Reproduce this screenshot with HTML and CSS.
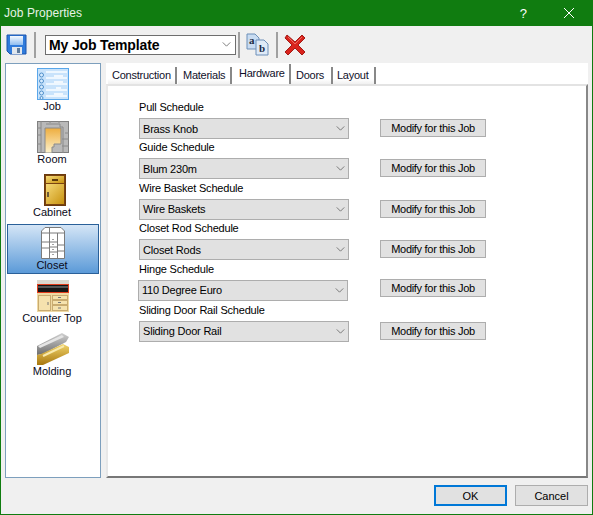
FILE: index.html
```html
<!DOCTYPE html>
<html lang="en">
<head>
	<meta charset="UTF-8">
	<title>Job Properties</title>
	<link rel="stylesheet" href="styles.css">
</head>
<body>
<div class="window">
	<div class="titlebar">
		<span class="title">Job Properties</span>
		<span class="help">?</span>
		<svg class="close" width="12" height="12" viewBox="0 0 12 12"><path d="M1 1L11 11M11 1L1 11" stroke="#fff" stroke-width="1" fill="none"/></svg>
	</div>

	<div class="toolbar">
		<svg class="tool-save" width="21" height="21" viewBox="0 0 21 21">
			<defs>
				<linearGradient id="diskFace" x1="0" y1="0" x2="0" y2="1"><stop offset="0" stop-color="#f4f9ff"/><stop offset="1" stop-color="#8fbdf0"/></linearGradient>
			</defs>
			<path d="M1 1H20V20H4L1 17Z" fill="#2f7bdc" stroke="#1c55ab"/>
			<rect x="4" y="2" width="13" height="9" fill="url(#diskFace)"/>
			<rect x="6" y="13" width="10" height="7" fill="#dfe6ee"/>
			<rect x="11" y="14" width="3" height="5" fill="#5d7a9c"/>
		</svg>
		<span class="sep sep-save"></span>
		<div class="template-box">
			<span>My Job Template</span>
			<svg class="chevron" viewBox="0 0 10 6"><path d="M0.5 0.5L5 5L9.5 0.5" fill="none"/></svg>
		</div>
		<span class="sep sep-combo"></span>
		<svg class="tool-rename" width="23" height="23" viewBox="0 0 23 23">
			<path d="M1 1H9L13 5V16H1Z" fill="#c9dcf2" stroke="#6d8fb8"/>
			<path d="M10 7H18L22 11V22H10Z" fill="#dfeaf7" stroke="#6d8fb8"/>
			<text x="3" y="11" class="ab">a</text>
			<text x="13" y="19" class="ab">b</text>
		</svg>
		<span class="sep sep-rename"></span>
		<svg class="tool-delete" width="22" height="22" viewBox="0 0 22 22">
			<path d="M3 1L11 8L18 1L21 4L14 11L21 18L18 21L11 14L4 21L1 18L8 11L1 4Z" fill="#d9231c" stroke="#a31a15" stroke-linejoin="round"/>
			<path d="M4 3L11 10L18 3" stroke="#ee6a60" fill="none"/>
		</svg>
	</div>

	<div class="main">
		<div class="sidebar">
			<div class="side-item">
				<svg width="32" height="32" viewBox="0 0 32 32">
					<rect x="0.5" y="0.5" width="31" height="31" fill="#c9e3fb" stroke="#5aa7ea"/>
					<path d="M9 4H30M9 10H30M9 16H30M9 22H30M9 28H30" stroke="#eef7ff" stroke-width="2"/>
					<path d="M17 8H26M17 14H26M19 20H24M17 26H26" stroke="#fff" stroke-width="1.5"/>
					<g fill="#d6ecff" stroke="#4f8fca">
						<circle cx="4.5" cy="7" r="2"/><circle cx="4.5" cy="13" r="2"/><circle cx="4.5" cy="19" r="2"/><circle cx="4.5" cy="25" r="2"/><circle cx="4.5" cy="30" r="1.5"/>
					</g>
				</svg>
				<span>Job</span>
			</div>
			<div class="side-item">
				<svg width="32" height="32" viewBox="0 0 32 32">
					<defs>
						<linearGradient id="roomFloor" x1="0" y1="0" x2="0" y2="1"><stop offset="0" stop-color="#eead3e"/><stop offset="1" stop-color="#fdf3cf"/></linearGradient>
					</defs>
					<rect x="0.5" y="0.5" width="31" height="31" fill="#b9b9b9" stroke="#808080"/>
					<path d="M0 7H4M0 14H4M0 23H4M4 0V32M28 12H32M25 18H32M25 25H32M13 0V2M22 0V2M9 3H23V6H26V32" stroke="#8a8a8a" fill="none"/>
					<path d="M8 7H24V23H17V26H15V32H8Z" fill="url(#roomFloor)" stroke="#8a8a8a"/>
				</svg>
				<span>Room</span>
			</div>
			<div class="side-item">
				<svg class="icon-cabinet" width="22" height="32" viewBox="0 0 22 32">
					<defs>
						<linearGradient id="cabGold" x1="0" y1="0" x2="1" y2="1"><stop offset="0" stop-color="#f6da78"/><stop offset="1" stop-color="#c8920f"/></linearGradient>
					</defs>
					<rect x="0.5" y="0.5" width="21" height="31" fill="#7a4310" stroke="#6a3a0d"/>
					<rect x="2" y="2" width="18" height="7" fill="url(#cabGold)"/>
					<rect x="2" y="10" width="18" height="20" fill="url(#cabGold)"/>
					<rect x="8" y="5" width="6" height="2" fill="#5e3b0c"/>
					<rect x="3" y="18" width="2" height="5" fill="#6d5a3a"/>
				</svg>
				<span>Cabinet</span>
			</div>
			<div class="side-item selected">
				<svg width="24" height="32" viewBox="0 0 24 32">
					<path d="M0.5 31.5V4L4 0.5H20L23.5 4V31.5Z" fill="#fff" stroke="#7b7b7b"/>
					<path d="M0.5 6H23.5M8.5 1V31.5M16.5 6V31.5M0.5 15H8.5M0.5 21H8.5M8.5 15H16.5M8.5 20H16.5M8.5 25H16.5M16.5 18H23.5M16.5 24H23.5" stroke="#7b7b7b" fill="none"/>
					<path d="M12 12V13M12 17V18M12 22V23M12 27V28" stroke="#444"/>
				</svg>
				<span>Closet</span>
			</div>
			<div class="side-item">
				<svg width="32" height="32" viewBox="0 0 32 32">
					<rect x="0" y="0" width="32" height="4" fill="#dcd8cf"/>
					<rect x="0.5" y="4.5" width="31" height="8" fill="#161616" stroke="#e23d1c"/>
					<rect x="1" y="6" width="30" height="2" fill="#555"/>
					<rect x="0" y="13" width="32" height="19" fill="#efd9a3"/>
					<rect x="1.5" y="15.5" width="12" height="15" fill="#f5e2ae" stroke="#c9ab70"/>
					<g fill="#f5e2ae" stroke="#c9ab70">
						<rect x="15.5" y="15.5" width="15" height="4"/><rect x="15.5" y="20.5" width="15" height="4"/><rect x="15.5" y="25.5" width="15" height="5"/>
					</g>
					<path d="M21 17.500H24M21 22.500H24M21 28H24M11 22V25" stroke="#777"/>
				</svg>
				<span>Counter Top</span>
			</div>
			<div class="side-item">
				<svg width="32" height="32" viewBox="0 0 32 32">
					<defs>
						<linearGradient id="moldGray" x1="0" y1="0" x2="0" y2="1"><stop offset="0" stop-color="#d0d0d0"/><stop offset="1" stop-color="#6e6e6e"/></linearGradient>
						<linearGradient id="moldGold" x1="0" y1="0" x2="0" y2="1"><stop offset="0" stop-color="#f0d36a"/><stop offset="1" stop-color="#a9780f"/></linearGradient>
					</defs>
					<path d="M0 13L25 0L32 4L29 9L6 21L0 22Z" fill="url(#moldGray)"/>
					<path d="M1 13L25 2L27 4L3 15Z" fill="#e4e4e4"/>
					<path d="M0 22V32H6L32 20V14L26 11L4 21Z" fill="url(#moldGold)"/>
					<path d="M6 23L27 13" stroke="#f8e9ac" stroke-width="2"/>
				</svg>
				<span>Molding</span>
			</div>
		</div>

		<div class="tabs">
			<div class="tab-strip">
				<span class="tab tab-construction">Construction</span>
				<span class="tab tab-materials">Materials</span>
				<span class="tab tab-hardware active">Hardware</span>
				<span class="tab tab-doors">Doors</span>
				<span class="tab tab-layout">Layout</span>
			</div>
			<div class="tab-panel">
				<div class="field">
					<label>Pull Schedule</label>
					<div class="field-row">
						<div class="picker">Brass Knob<svg class="chevron" viewBox="0 0 10 6"><path d="M0.5 0.5L5 5L9.5 0.5" fill="none"/></svg></div>
						<button class="modify">Modify for this Job</button>
					</div>
				</div>
				<div class="field">
					<label>Guide Schedule</label>
					<div class="field-row">
						<div class="picker">Blum 230m<svg class="chevron" viewBox="0 0 10 6"><path d="M0.5 0.5L5 5L9.5 0.5" fill="none"/></svg></div>
						<button class="modify">Modify for this Job</button>
					</div>
				</div>
				<div class="field">
					<label>Wire Basket Schedule</label>
					<div class="field-row">
						<div class="picker">Wire Baskets<svg class="chevron" viewBox="0 0 10 6"><path d="M0.5 0.5L5 5L9.5 0.5" fill="none"/></svg></div>
						<button class="modify">Modify for this Job</button>
					</div>
				</div>
				<div class="field">
					<label>Closet Rod Schedule</label>
					<div class="field-row">
						<div class="picker">Closet Rods<svg class="chevron" viewBox="0 0 10 6"><path d="M0.5 0.5L5 5L9.5 0.5" fill="none"/></svg></div>
						<button class="modify">Modify for this Job</button>
					</div>
				</div>
				<div class="field">
					<label>Hinge Schedule</label>
					<div class="field-row">
						<div class="picker picker-left">110 Degree Euro<svg class="chevron" viewBox="0 0 10 6"><path d="M0.5 0.5L5 5L9.5 0.5" fill="none"/></svg></div>
						<button class="modify modify-up">Modify for this Job</button>
					</div>
				</div>
				<div class="field field-last">
					<label>Sliding Door Rail Schedule</label>
					<div class="field-row">
						<div class="picker">Sliding Door Rail<svg class="chevron" viewBox="0 0 10 6"><path d="M0.5 0.5L5 5L9.5 0.5" fill="none"/></svg></div>
						<button class="modify">Modify for this Job</button>
					</div>
				</div>
			</div>
		</div>
	</div>

	<div class="footer">
		<button class="dlg-btn default">OK</button>
		<button class="dlg-btn">Cancel</button>
	</div>
</div>
</body>
</html>
```

FILE: styles.css
```css
*{padding: 0; margin: 0; box-sizing: border-box;}
html, body{ width: 593px; height: 515px; overflow: hidden; }
body{ font-family: "Liberation Sans", Arial, sans-serif; font-size: 11px; color: #000; }

.window{ display: flex; flex-direction: column; width: 593px; height: 515px; border: 1px solid #107c10; border-top: 0; background: #f0f0f0; }

.titlebar{ display: flex; align-items: center; height: 26px; flex: none; background: #107c10; color: #e6f2e6; font-size: 12px; padding: 0 17px 0 3px; }
.title{ flex: 1; letter-spacing: 0.05px; }
.help{ font-size: 13px; margin-right: 36px; color: #fff; }

.toolbar{ display: flex; align-items: center; height: 37px; flex: none; padding-left: 5px; }
.sep{ width: 2px; height: 26px; background: #a0a0a0; }
.sep-save{ margin: 0 9px 0 7px; }
.sep-combo{ margin: 0 6px 0 2px; }
.sep-rename{ margin: 0 6px 0 7px; }
.ab{ font-family: "Liberation Serif", serif; font-weight: bold; font-size: 11px; fill: #1d2c44; }

.chevron{ width: 9px; height: 5px; flex: none; stroke: #666; }

.template-box{ display: flex; align-items: center; justify-content: space-between; width: 191px; height: 20px; background: #fff; border: 1px solid #6e6e6e; padding: 0 4px 0 3px; font-size: 14px; font-weight: bold; letter-spacing: -0.15px; }

.main{ display: flex; flex: none; height: 415px; padding: 0 4px; gap: 5px; }

.sidebar{ width: 96px; height: 415px; background: #fff; border: 1px solid #7d9fbd; padding: 1px; flex: none; display: flex; flex-direction: column; gap: 3px; }
.side-item{ display: flex; flex-direction: column; align-items: center; justify-content: flex-end; width: 92px; height: 50px; padding-bottom: 2px; flex: none; line-height: 13px; color: #0a0a20; }
.side-item svg{ display: block; }
.side-item span{ padding-right: 2px; }
.side-item .icon-cabinet{ margin-left: 3px; }
.selected{ background: linear-gradient(#d4e5f6, #5b9ad8); border: 1px solid #2a6099; padding-bottom: 1px; }

.tabs{ width: 482px; display: flex; flex-direction: column; flex: none; }
.tab-strip{ display: flex; align-items: flex-end; height: 21px; background: #fff; padding-left: 2px; flex: none; }
.tab{ height: 17px; line-height: 16px; border-right: 2px solid #888; background: linear-gradient(#fff 70%, #f0f0f0); color: #10102a; letter-spacing: -0.25px; white-space: nowrap; }
.tab-construction{ width: 69px; padding-left: 4px; margin-right: 1px; }
.tab-materials{ width: 54px; padding-left: 5px; }
.tab-hardware{ width: 59px; padding-left: 7px; }
.tab-doors{ width: 42px; padding-left: 5px; }
.tab-layout{ width: 43px; padding-left: 4px; }
.tab.active{ height: 20px; line-height: 18px; background: #fff; }

.tab-panel{ flex: 1; background: #fff; border: 2px solid; border-color: #e3e3e3 #888 #777 #e8e8e8; padding: 12px 0 0 31px; }

.field{ height: 40.4px; }
.field-last{ padding-top: 1px; }
.field label{ display: block; height: 20px; line-height: 19px; letter-spacing: -0.2px; }
.field-row{ display: flex; align-items: flex-start; }
.picker{ display: flex; align-items: center; justify-content: space-between; width: 210px; height: 21px; background: #e1e1e1; border: 1px solid #adadad; padding: 0 3px 0 3px; letter-spacing: -0.2px; }
.picker-left{ margin-left: -1px; margin-right: 1px; }
.modify{ width: 106px; height: 18px; margin: 1px 0 0 31px; background: #e1e1e1; border: 1px solid #adadad; font: inherit; letter-spacing: -0.3px; color: #000; }
.modify-up{ margin-top: -1px; }

.footer{ display: flex; justify-content: flex-end; gap: 8px; padding: 7px 4px 0 0; flex: 1; }
.dlg-btn{ width: 73px; height: 21px; background: #e1e1e1; border: 1px solid #adadad; font: inherit; color: #000; }
.dlg-btn.default{ border: 2px solid #0078d7; }
```
